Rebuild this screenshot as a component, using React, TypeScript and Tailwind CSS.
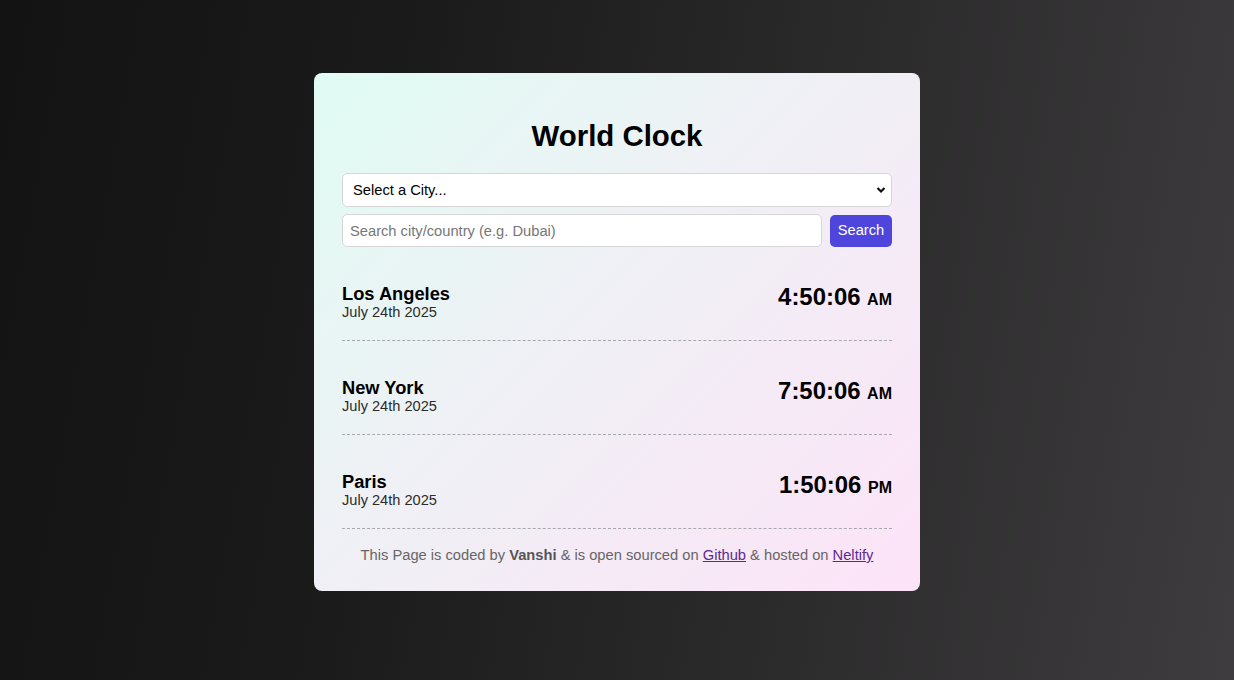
import React from "react";

// World clock card: city picker, search box and a list of local times.

type City = { name: string; date: string; time: string; period: "AM" | "PM" };

const CITIES: City[] = [
  { name: "Los Angeles", date: "July 24th 2025", time: "4:50:06", period: "AM" },
  { name: "New York", date: "July 24th 2025", time: "7:50:06", period: "AM" },
  { name: "Paris", date: "July 24th 2025", time: "1:50:06", period: "PM" },
];

function CityRow({ city }: { city: City }) {
  return (
    <div className="flex items-start justify-between border-b border-dashed border-[#a8a8ad] pt-[36px] pb-[19px]">
      <div>
        <div className="text-[18.3px] font-bold leading-[21px] text-black">{city.name}</div>
        <div className="text-[14.6px] leading-[17px] text-[#2b2b2b]">{city.date}</div>
      </div>
      <div className="text-[23.9px] font-bold leading-[27px] text-black">
        {city.time} <span className="text-[16px]">{city.period}</span>
      </div>
    </div>
  );
}

export default function App() {
  return (
    <div
      className="min-h-[680px] w-full overflow-hidden bg-[linear-gradient(100deg,#131313_0%,#1a1a1a_30%,#3e3c3e_100%)] pt-[73px]"
      style={{ fontFamily: '"Liberation Sans", Arial, sans-serif' }}
    >
      <div className="mx-auto w-[606px] rounded-[8px] bg-[linear-gradient(135deg,#e0fcf3_0%,#eff0f5_45%,#fde3f8_100%)] px-[28px] pt-[46px] pb-[27px]">
        <h1 className="text-center text-[29.4px] font-bold leading-[34px] text-black">World Clock</h1>

        <div className="relative mt-[20px]">
          <select
            className="h-[34px] w-full appearance-none rounded-[5px] border border-[#d6d6d6] bg-white pl-[10px] text-[14.7px] text-black outline-none"
            defaultValue=""
          >
            <option value="">Select a City...</option>
          </select>
          <svg
            className="pointer-events-none absolute right-[6px] top-[13px]"
            width="10"
            height="8"
            viewBox="0 0 10 8"
          >
            <path d="M1.5 2 L5 5.5 L8.5 2" fill="none" stroke="#111" strokeWidth="2.2" />
          </svg>
        </div>

        <div className="mt-[7px] flex items-center gap-[8px]">
          <input
            className="h-[33px] flex-1 rounded-[5px] border border-[#d6d6d6] bg-white px-[7px] text-[14.7px] text-black outline-none placeholder:text-[#777]"
            placeholder="Search city/country (e.g. Dubai)"
          />
          <button className="h-[32px] w-[62px] rounded-[5px] bg-[#4d45dc] text-[14.7px] text-white">
            Search
          </button>
        </div>

        <div>
          {CITIES.map((c) => (
            <CityRow key={c.name} city={c} />
          ))}
        </div>

        <p className="mt-[18px] text-center text-[14.7px] leading-[17px] text-[#666]">
          This Page is coded by <b className="text-[#555]">Vanshi</b> &amp; is open sourced on{" "}
          <a className="text-[#5a2a90] underline" href="#">
            Github
          </a>{" "}
          &amp; hosted on{" "}
          <a className="text-[#5a2a90] underline" href="#">
            Neltify
          </a>
        </p>
      </div>
    </div>
  );
}
